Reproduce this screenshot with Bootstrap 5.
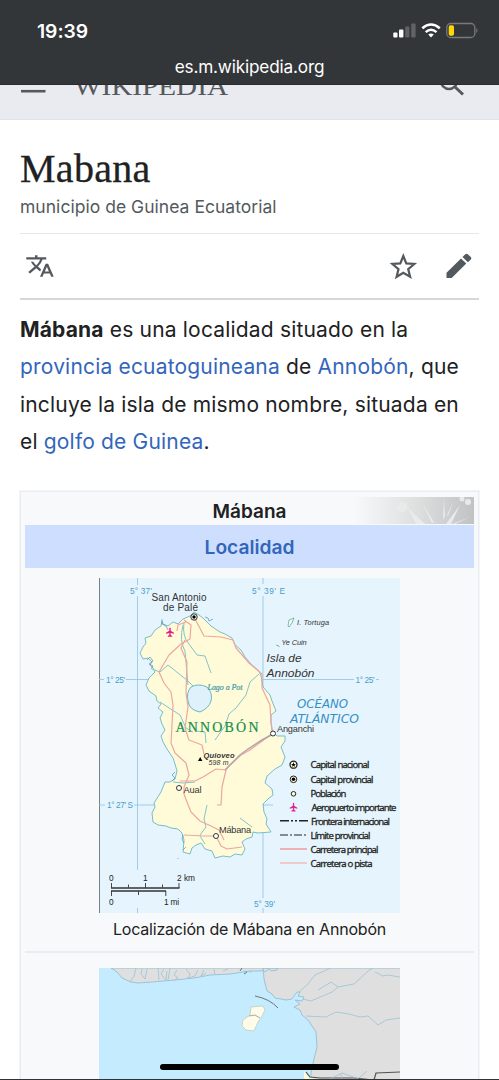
<!DOCTYPE html>
<html lang="es">
<head>
<meta charset="utf-8">
<meta name="viewport" content="width=device-width, initial-scale=1">
<title>Mabana - Wikipedia</title>
<link href="https://cdn.jsdelivr.net/npm/bootstrap@5.3.0/dist/css/bootstrap.min.css" rel="stylesheet">
<style>
body{font-family:Inter,"Liberation Sans",sans-serif;color:#202122;height:1080px;overflow:hidden;background:#fff}
svg{display:block}
.phone-top{height:85px;background:#333639;color:#fff;border-bottom:1px solid #292b30}
.status-row{height:53px;padding:9px 20px 0 37px}
.clock{font-size:19.3px;font-weight:600;letter-spacing:-.05px}
.address{font-size:17.2px;line-height:28px;letter-spacing:-.17px}
.wiki-bar{height:35px;background:#eaebf0;overflow:hidden;padding:0 20px;border-bottom:1px solid #e2e3e8}
.wiki-mark text{font-family:"Liberation Serif",serif;fill:#54595d}
.page-main{padding:0 20px}
.page-title{font:400 40px/46px "Liberation Serif",serif;letter-spacing:.3px;-webkit-text-stroke:.3px #202122;padding-top:26px;color:#202122}
.tagline{font-size:17.5px;line-height:26px;color:#54595d;letter-spacing:.03px;padding-top:2px}
.tools{height:67px;margin-top:13px;border-top:1px solid #e6e8eb;border-bottom:2px solid #d5d7da}
.intro{font-size:21px;line-height:37.4px;padding-top:11px;letter-spacing:.18px;white-space:nowrap}
a{color:#3366bb;text-decoration:none}
.infobox{margin-top:30px;border:1px solid #eaecf0;background:#f8f9fa;padding:5px 4px 0;height:640px;outline:1px solid #f4f5f7}
.box-title{height:28px;font-size:19px;line-height:29px;background:#f8f9fa}
.box-type{height:43px;line-height:45px;background:#cedefe;font-size:19.2px}
.box-caption{font-size:16px;line-height:33px;letter-spacing:-.2px}
.box-cell{border-bottom:2px solid #eaecf0;height:385px;padding-top:10px}
.home-bar{left:160px;top:1064px;width:179px;height:6px;border-radius:3px;background:#000}
.bottom-edge{left:0;top:1079px;width:499px;height:1px;background:#303236}
.map-text{font-family:"Liberation Sans",sans-serif}
.key-text{font-family:"Open Sans","Noto Sans",sans-serif;font-size:9.6px;font-weight:500;stroke:#222;stroke-width:.3}
</style>
</head>
<body>
<header class="phone-top">
  <div class="status-row d-flex align-items-center justify-content-between">
    <span class="clock">19:39</span>
    <svg width="87" height="20" viewBox="392 20.500 87 20">
      <rect x="393.300" y="32" width="4.200" height="5" rx="1" fill="#fff"/><rect x="399" y="29" width="4.400" height="8" rx="1" fill="#fff"/>
      <rect x="405.200" y="26" width="4.200" height="11" rx="1" fill="#606265"/><rect x="411.200" y="23" width="4.400" height="14" rx="1" fill="#606265"/>
      <g fill="none" stroke="#fff" stroke-width="2.500"><path d="M422.300 27.800Q431 20.200 439.800 27.800"/><path d="M425.700 31.600Q431 27 436.500 31.600"/></g>
      <path fill="#fff" d="M428.300 34Q431 31.900 433.800 34L431 37Z"/>
      <rect x="446.800" y="23" width="28" height="14" rx="4" fill="none" stroke="#77797b" stroke-width="1.300"/>
      <rect x="448.700" y="24.800" width="5.300" height="10.400" rx="1.800" fill="#ffd60a"/>
      <path d="M476.300 27.500q2.600 2.500 0 5z" fill="#77797b"/>
    </svg>
  </div>
  <div class="address text-center">es.m.wikipedia.org</div>
</header>
<div class="wiki-bar">
  <svg class="wiki-mark" width="459" height="33" viewBox="20 85 459 33">
    <path d="M21 91.200h24.500" stroke="#54595d" stroke-width="2.600"/>
    <text x="74" y="94.800" font-size="26" textLength="154" lengthAdjust="spacingAndGlyphs">WIKIPEDIA</text>
    <circle cx="449" cy="81" r="8" fill="none" stroke="#54595d" stroke-width="2.500"/><path d="M454.500 86.500l8.500 8" stroke="#54595d" stroke-width="3"/>
  </svg>
</div>
<main class="page-main">
  <h1 class="page-title m-0">Mabana</h1>
  <div class="tagline">municipio de Guinea Ecuatorial</div>
  <nav class="tools d-flex align-items-center justify-content-between">
    <svg width="30" height="26" viewBox="0 0 24 24" preserveAspectRatio="none" fill="#54595d" style="margin-left:5px"><path d="M12.870 15.070l-2.540-2.510.03-.03A17.520 17.520 0 0 0 14.070 6H17V4h-7V2H8v2H1v1.990h11.170C11.500 7.920 10.440 9.750 9 11.350 8.070 10.320 7.300 9.190 6.690 8h-2c.73 1.630 1.730 3.170 2.980 4.560l-5.090 5.020L4 19l5-5 3.110 3.110.76-2.040zM18.500 10h-2L12 22h2l1.120-3h4.750L21 22h2l-4.500-12zm-2.620 7l1.620-4.330L19.120 17h-3.240z"/></svg>
    <svg width="94" height="34" viewBox="385 249.500 94 34"><path d="M403.300 256.500l3 7.400 8 .6-6.100 5.100 1.900 7.700-6.800-4.100-6.700 4.100 1.900-7.700-6.100-5.100 7.900-.6z" fill="none" stroke="#54595d" stroke-width="2.200"/><path fill="#54595d" d="M446.500 273.300L461 259l5.300 5-14.600 14.500H446.500zM462.500 257.500l2.800-2.800q1.300-1 2.500 0l3 2.900q1 1.200 0 2.300l-2.900 2.900z"/></svg>
  </nav>
  <p class="intro m-0"><b>Mábana</b> es una localidad situado en la<br><a href="#">provincia ecuatoguineana</a> de <a href="#">Annobón</a>, que<br>incluye la isla de mismo nombre, situada en<br>el <a href="#">golfo de Guinea</a>.</p>
  <section class="infobox">
    <div class="box-title position-relative text-center fw-semibold">Mábana
      <svg class="position-absolute top-0 end-0" width="120" height="27" viewBox="354 497 120 27">
        <defs><linearGradient id="fade"><stop stop-color="#f8f9fa"/><stop offset=".55" stop-color="#dcdddd"/><stop offset="1" stop-color="#c0c2c4"/></linearGradient></defs>
        <path fill="url(#fade)" d="M354 497h120v27H354z"/>
        <g fill="#e9ebeb"><path d="M400 502l6 1 2 5-6 5-6-4zM407 507l18 17h-9zM422 503l12 19-2 1zM444 498l1 18-2 4zM460 505l-9 19h-5zM470 517l-15 7h-3zM453 502l-5 14-1-1z"/><circle cx="462" cy="499" r="2.500"/><circle cx="468" cy="502" r="3"/></g>
      </svg>
    </div>
    <div class="box-type text-center fw-semibold"><a href="#">Localidad</a></div>
    <div class="box-cell">
      <svg class="mx-auto" width="301" height="335" viewBox="99 578 301 335">
        <path fill="#e6f5fd" d="M99 578h301v335H99z"/>
        <path d="M99.500 578v335" stroke="#788087"/>
        <g fill="none" stroke="#94c8e7" stroke-width=".9"><path d="M137.500 578v7M137.500 596v274M137.500 908v5M263 578v6M263 596v302M263 908v5M99 679.500h5M126 679.500h27M263 679.500h91M376 679.500h3M99 805h6M134 805h20M263 805h10"/></g>
        <path fill="#fffbd9" stroke="#69b6c8" stroke-width=".9" stroke-linejoin="round" d="M194 612L190 616 183 619 178 624 173 622 168 626 163 624 162 621 161 626 155 630 151 636 145 638 146 643 143 647 140 653 143 659 148 658 152 662 150 665 153 668 155 672 149 678 146 685 149 691 156 696 157 701 161 704 158 708 163 712 160 718 162 724 165 730 161 736 163 742 167 749 173 758 175 764 177 771 175 779 170 782 165 782 161 792 154 803 155 807 152 813 153 822 158 825 166 826 171 828 178 829 182 833 184 840 183 852 190 854 192 848 196 845 201 843 205 849 212 851 215 858 223 856 230 857 235 854 242 855 245 849 242 842 246 839 252 837 253 832 258 833 271 832 266 824 267 819 264 812 263 804 269 798 273 795 272 789 265 783 267 776 275 769 282 765 285 757 281 747 285 741 285 736 277 736 272 731 271 723 271 715 276 711 272 701 270 695 263 687 261 676 259 671 251 664 245 657 241 650 235 645 232 638 225 634 220 632 211 626 204 619 199 615Z"/>
        <path fill="#dff2fb" stroke="#69b6c8" d="M191 687q7-4 16 0 6 6 4 14-2 7-11 11-11-2-12-11-2-8 3-14z"/>
        <g fill="none" stroke="#83c4c8" stroke-width="1"><path d="M152 669l8 3 8-7 10 8 10 8 5 5M184 622q-2 15 5 22l8 11 8 1 6 17M183 625q-4 16 2 26l3 34M160 702l20 13 6 13 7 4M259 674l-9 8-4 13-10 13-7 6-4 12-10 14M196 731l9 1 1 11M173 782q9 2 22 0M207 805l-3 14 2 8-6 8M200 836l5 8M240 818l12 9"/></g>
        <g fill="none" stroke="#eda6a0" stroke-width="1.200" stroke-linejoin="round"><path d="M194 617l10 19 17 1 12 3 3 8 13 15 13 11v14l8 17 1 18 2 10-23 17-9 5-12 11-3 4-10-1-13 8-8 4h-15"/><path d="M184 620l7 5-1 14-9 5-12 11-10 17 5 11 7 9 2 13-1 20-1 18 4 10 11 10 3 12-5 12v7l3 8 4 10 9 9 11 5 8 4 5 10M186 622l-8 3-1 6M185 640l-4 8 6 14-1 31 2 14-3 21 4 12 13 5 2 9M216 836h-11l-21-1M216 836l5 10 6 3 15-2M226 770l-4 17-1 18h-4"/></g>
        <path d="M225 770l8-8 7-7 8-6 14-9 11-6" fill="none" stroke="#b4a5aa" stroke-width="1.500"/>
        <g fill="none" stroke="#528fc0" stroke-width=".7"><path d="M162 619v5l4 2 2 4M147 660l3-3 3 4-4 3 4 2-2 3M205 617l3 1 1 3 4-2M175 772l-3 3 3 3-3 3M183 835l-1 4 2 4M183 850l3-3M178 858v1"/></g>
        <path d="M288 626l1-6 5-2-2 5-3 4zM276 645l3 1v1" fill="#f5fbef" stroke="#61a7b0" stroke-width=".8"/>
        <g fill="#fff" stroke="#333"><circle cx="194" cy="617" r="3.200"/><circle cx="273" cy="733.500" r="2.500"/><circle cx="179" cy="788" r="2.500"/><circle cx="216" cy="836" r="2.500"/></g><circle cx="194" cy="617" r="1.700"/>
        <path d="M198 761l2.200-4 2.200 4z"/>
        <defs><path id="plane" d="M-.7-4Q0-5 .7-4v2.800l3.300 2v1L.7 1v2l1.500 1v.8H-2.200V4l1.500-1V1L-4 1.800v-1l3.300-2z"/></defs>
        <use href="#plane" transform="translate(170 632)" fill="#e51b83"/>
        <g class="map-text" fill="#333">
          <g fill="#4a9ccc" font-size="8.300"><text x="130" y="594" textLength="22">5° 37'</text><text x="252" y="594" textLength="33">5° 39' E</text><text x="106" y="683" textLength="19">1° 25'</text><text x="355.500" y="683" textLength="19">1° 25'</text><text x="107" y="808" textLength="26">1° 27' S</text><text x="254" y="906.500" textLength="21">5° 39'</text></g>
          <g font-size="10"><text x="151.500" y="600.500" textLength="55">San Antonio</text><text x="163" y="611" textLength="35">de Palé</text></g>
          <g font-size="9.200"><text x="277" y="732" textLength="37">Anganchi</text><text x="183.500" y="793" textLength="18">Aual</text><text x="219" y="833" textLength="32">Mábana</text></g>
          <g font-style="italic"><text x="297" y="624.500" font-size="7.400" textLength="32">I. Tortuga</text><text x="281.500" y="645" font-size="7.400" textLength="25">Ye Cuin</text><text x="266.500" y="662" font-size="11.500" textLength="35" lengthAdjust="spacingAndGlyphs">Isla de</text><text x="266.500" y="676.500" font-size="11.500" textLength="48" lengthAdjust="spacingAndGlyphs">Annobón</text><text x="203.500" y="757.500" font-size="7.500" font-weight="bold" textLength="31">Quioveo</text><text x="208.500" y="765" font-size="7" textLength="20">598 m</text>
          <g fill="#368fc6" font-size="11.500" font-family="DejaVu Sans"><text x="297" y="708" textLength="51" lengthAdjust="spacingAndGlyphs">OCÉANO</text><text x="290" y="722.500" textLength="69" lengthAdjust="spacingAndGlyphs">ATLÁNTICO</text></g></g>
          <text x="175.500" y="731.500" font-family="Liberation Serif" font-size="14" fill="#158f4a" stroke="#158f4a" stroke-width=".2" textLength="83">ANNOBÓN</text>
          <text x="207.500" y="690" font-family="Liberation Serif" font-style="italic" font-size="8" fill="#419aa9" stroke="#419aa9" stroke-width=".2" textLength="35">Lago a Pot</text>
        </g>
        <g fill="#fffbd9" stroke="#222"><circle cx="293.500" cy="764.700" r="3.500" stroke-width="1.300"/><circle cx="293.500" cy="779.300" r="3.300"/><circle cx="293.500" cy="793.800" r="2.300"/></g>
        <path d="M293.500 762.100l.6 1.800h1.900l-1.500 1.200.6 1.900-1.600-1.200-1.600 1.200.6-1.900-1.500-1.200h1.900z"/><circle cx="293.500" cy="779.300" r="1.800"/>
        <use href="#plane" transform="translate(293.500 807) scale(.95)" fill="#df2395"/>
        <g fill="none" stroke="#222"><path stroke-width="1.500" stroke-dasharray="9 2 2 2 2 2" d="M280 820.800h28"/><path stroke-dasharray="8 2 2 2" d="M280 835h28"/></g><path d="M280 849h27" stroke="#f29a9c" stroke-width="1.500"/><path d="M280 863h27" stroke="#f4b2b2" stroke-width="1.300"/>
        <g class="key-text" fill="#222"><text x="310.500" y="767.800" textLength="59">Capital nacional</text><text x="310.500" y="782.500" textLength="63">Capital provincial</text><text x="310.500" y="796.500" textLength="36">Población</text><text x="311.500" y="810.500" textLength="85">Aeropuerto importante</text><text x="311" y="824.500" textLength="79">Frontera internacional</text><text x="310.500" y="839" textLength="60">Límite provincial</text><text x="310.500" y="853" textLength="68">Carretera principal</text><text x="310.500" y="866.500" textLength="62">Carretera o pista</text></g>
        <g fill="none" stroke="#333"><path stroke-width="1.300" d="M111 888h68.500M111 891h55"/><path stroke-width=".9" d="M111.500 883v5M128.500 884.500v3M145.500 883v5M162.500 884.500v3M179 883v5M111.500 891v5M138.500 891v4M165.800 891v5"/></g>
        <g class="map-text" font-size="8.300" fill="#222"><text x="109" y="880.500">0</text><text x="143" y="880.500">1</text><text x="177" y="880.500" textLength="18">2 km</text><text x="109" y="904.500">0</text><text x="164" y="904.500" textLength="15">1 mi</text></g>
      </svg>
      <div class="box-caption text-center">Localización de Mábana en Annobón</div>
    </div>
    <svg class="mx-auto" style="margin-top:15px" width="301" height="113" viewBox="99 967 301 113">
      <path fill="#c5ebff" d="M99 967h301v113H99z"/>
      <g fill="#dfdfdf" stroke="#8bbad3" stroke-width=".8" stroke-linejoin="round"><path d="M111 967l6 4 5 6 9 4 7 1 14-1 23-2 19-2 16-3 20-1 20-3h11l2-1 2 2 4-3 2 2 6-1 1-2zM263 967l1 11 3 12 5 3 3 4 6 1 5 1 6-1 5-7h3l-2 4 6 1-2 4-7-1 5 4-6 3 6 3 2 5 6 5 8 12 1 15-3 12-3 14v9l6 8 85 1V967z"/></g>
      <path fill="#fffbd9" d="M304 1070l5 6 8 3h-13z"/><path fill="none" stroke="#55534e" stroke-width="1.200" d="M306 1071l4 5 10 1h34l20 2 2-7 24-1"/>
      <g fill="none" stroke="#9cc1d5" stroke-width=".8"><path d="M136 967l-2 8-4 6M142 968l-1 5 4 5 2-10M158 967l1 12M164 968l-3 5 5 6 1-9M170 967l-2 12M177 969l-3 5 4 3-3 2M186 968l4 5-2 4 7-2 3-6M204 969l-3 6 5-3M214 968l1 5M223 970l5-2M244 970l8 1M299 991l9-8 7-9 16-7M303 998l8 2 21-9 6-5 16-3 14-13 5-3M318 989l13-8 7 5M375 971l8 4 4-1 13 2M306 1015l20 1 10-5 13 2 11 3 8-1 10 9 8-5 14-2M330 1078l12-6 17 6M341 1073l1 6M359 1077l8-7"/></g>
      <path fill="#fffbea" stroke="#b9ccaf" stroke-width=".7" d="M251 1006l12-1 2 4-3 6-4 6-4 9-8-1-4-4 1-6 7-5z"/><path d="M249 1015l6-1 5 3" fill="none" stroke="#a7ac9e"/>
      <path d="M255 995q15 3 23 12" fill="none" stroke="#707579"/>
      <path d="M240 970l2-3M244 973l3-2" stroke="#577b8d"/>
    </svg>
  </section>
</main>
<div class="home-bar position-fixed"></div><div class="bottom-edge position-fixed"></div>
<script src="https://cdn.jsdelivr.net/npm/bootstrap@5.3.0/dist/js/bootstrap.bundle.min.js"></script>
</body>
</html>
